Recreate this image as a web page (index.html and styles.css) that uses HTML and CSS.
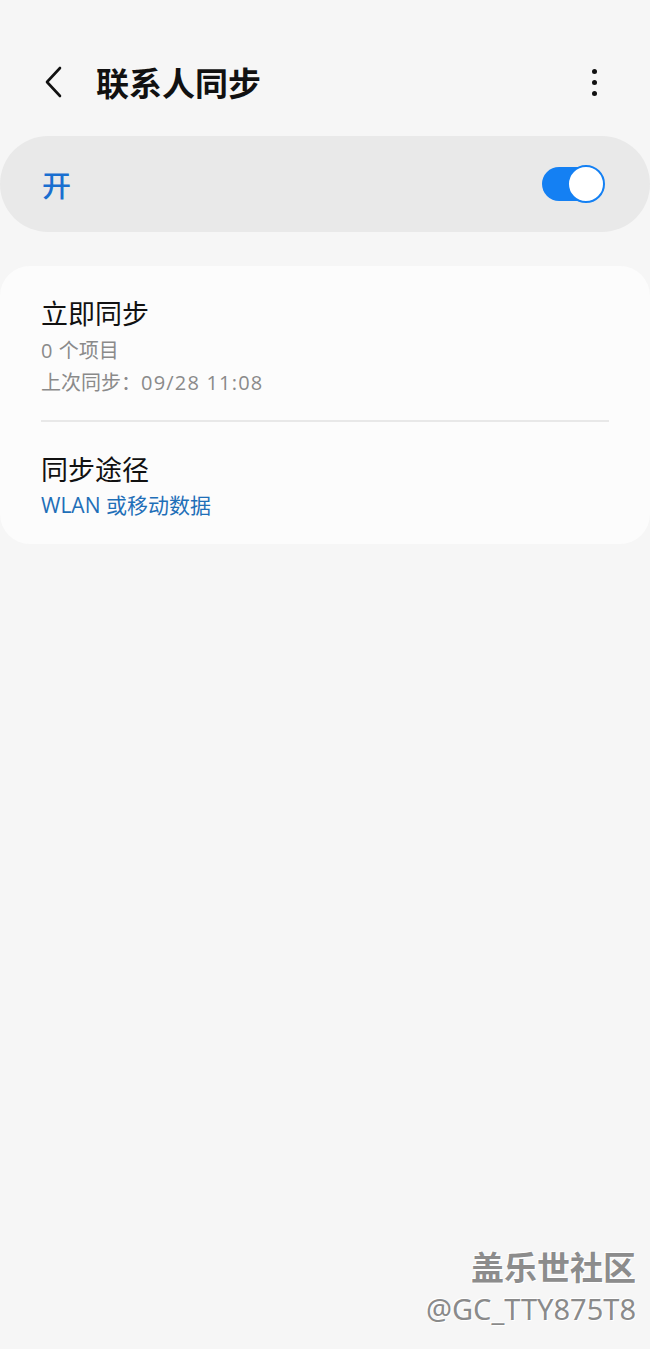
FILE: index.html
```html
<!DOCTYPE html>
<html lang="zh">
<head>
<meta charset="utf-8">
<link rel="stylesheet" href="styles.css">
</head>
<body>
<div class="screen">
  <header class="appbar">
    <svg class="back" width="22" height="32" viewBox="0 0 22 32"><path d="M17 2 L4 16 L17 30" fill="none" stroke="#111" stroke-width="2.6" stroke-linecap="round" stroke-linejoin="round"/></svg>
    <h1 class="title">联系人同步</h1>
    <div class="kebab"><span></span><span></span><span></span></div>
  </header>

  <section class="master">
    <span class="master-label">开</span>
    <div class="switch"><div class="knob"></div></div>
  </section>

  <section class="card">
    <div class="item">
      <div class="item-title">立即同步</div>
      <div class="subs">
        <div class="item-sub"><span class="num">0</span> 个项目</div>
        <div class="item-sub">上次同步：<span class="num">09/28 11:08</span></div>
      </div>
    </div>
    <div class="divider"></div>
    <div class="item">
      <div class="item-title">同步途径</div>
      <div class="item-link">WLAN 或移动数据</div>
    </div>
  </section>

  <div class="spacer"></div>

  <footer class="watermark">
    <div class="wm1">盖乐世社区</div>
    <div class="wm2">@GC_TTY875T8</div>
  </footer>
</div>
</body>
</html>
```

FILE: styles.css
```css
html, body {
  margin: 0;
  padding: 0;
  background: #f6f6f6;
}
body {
  font-family: "Noto Sans CJK SC", Roboto, "Noto Sans", sans-serif;
  color: #111;
}
.screen {
  width: 650px;
  height: 1349px;
  display: flex;
  flex-direction: column;
}
.appbar {
  height: 136px;
  display: flex;
  align-items: center;
  padding: 28px 0 0 43px;
  box-sizing: border-box;
}
.back {
  display: block;
  flex: none;
}
.title {
  margin: 0 0 0 31px;
  font-size: 33px;
  font-weight: 700;
  line-height: 40px;
  flex: 1;
}
.kebab {
  width: 6px;
  display: flex;
  flex-direction: column;
  gap: 6px;
  margin-right: 52px;
}
.kebab span {
  width: 5px;
  height: 5px;
  border-radius: 50%;
  background: #111;
}
.master {
  height: 96px;
  background: #e9e9e9;
  border-radius: 48px;
  display: flex;
  align-items: center;
  justify-content: space-between;
  padding: 0 46px 0 42px;
}
.master-label {
  color: #1a6fd0;
  font-size: 29px;
  font-weight: 500;
  line-height: 36px;
}
.switch {
  width: 62px;
  height: 34px;
  background: #1480f3;
  border-radius: 17px;
  position: relative;
}
.knob {
  position: absolute;
  right: -1px;
  top: -2px;
  width: 34px;
  height: 34px;
  border-radius: 50%;
  background: #fff;
  border: 2px solid #1480f3;
}
.card {
  margin-top: 34px;
  background: #fcfcfc;
  border-radius: 30px;
  padding: 0 41px;
  height: 278px;
  box-sizing: border-box;
}
.item {
  padding-top: 29px;
}
.item-title {
  font-size: 27px;
  line-height: 36px;
  color: #111;
}
.subs {
  margin-top: 4px;
}
.item-sub {
  font-family: "Open Sans", "Noto Sans CJK SC", sans-serif;
  font-size: 20px;
  line-height: 32px;
  color: #8a8a8a;
}
.num {
  letter-spacing: 1.2px;
}
.divider {
  height: 2px;
  background: #e8e8e8;
  margin-top: 21px;
}
.item-link {
  font-family: "Open Sans", "Noto Sans CJK SC", sans-serif;
  font-size: 21px;
  line-height: 36px;
  color: #1f6fb8;
}
.spacer {
  flex: 1;
}
.watermark {
  text-align: right;
  padding-right: 14px;
  padding-bottom: 20px;
  color: #8c8c8c;
  text-shadow: 1px 1px 0 #fff, -1px -1px 0 #fff;
}
.wm1 {
  font-size: 33px;
  font-weight: 700;
  line-height: 40px;
}
.wm2 {
  font-family: "Noto Sans", sans-serif;
  font-size: 29px;
  line-height: 40px;
  margin-top: 3px;
  color: #8a8a8a;
}
```
